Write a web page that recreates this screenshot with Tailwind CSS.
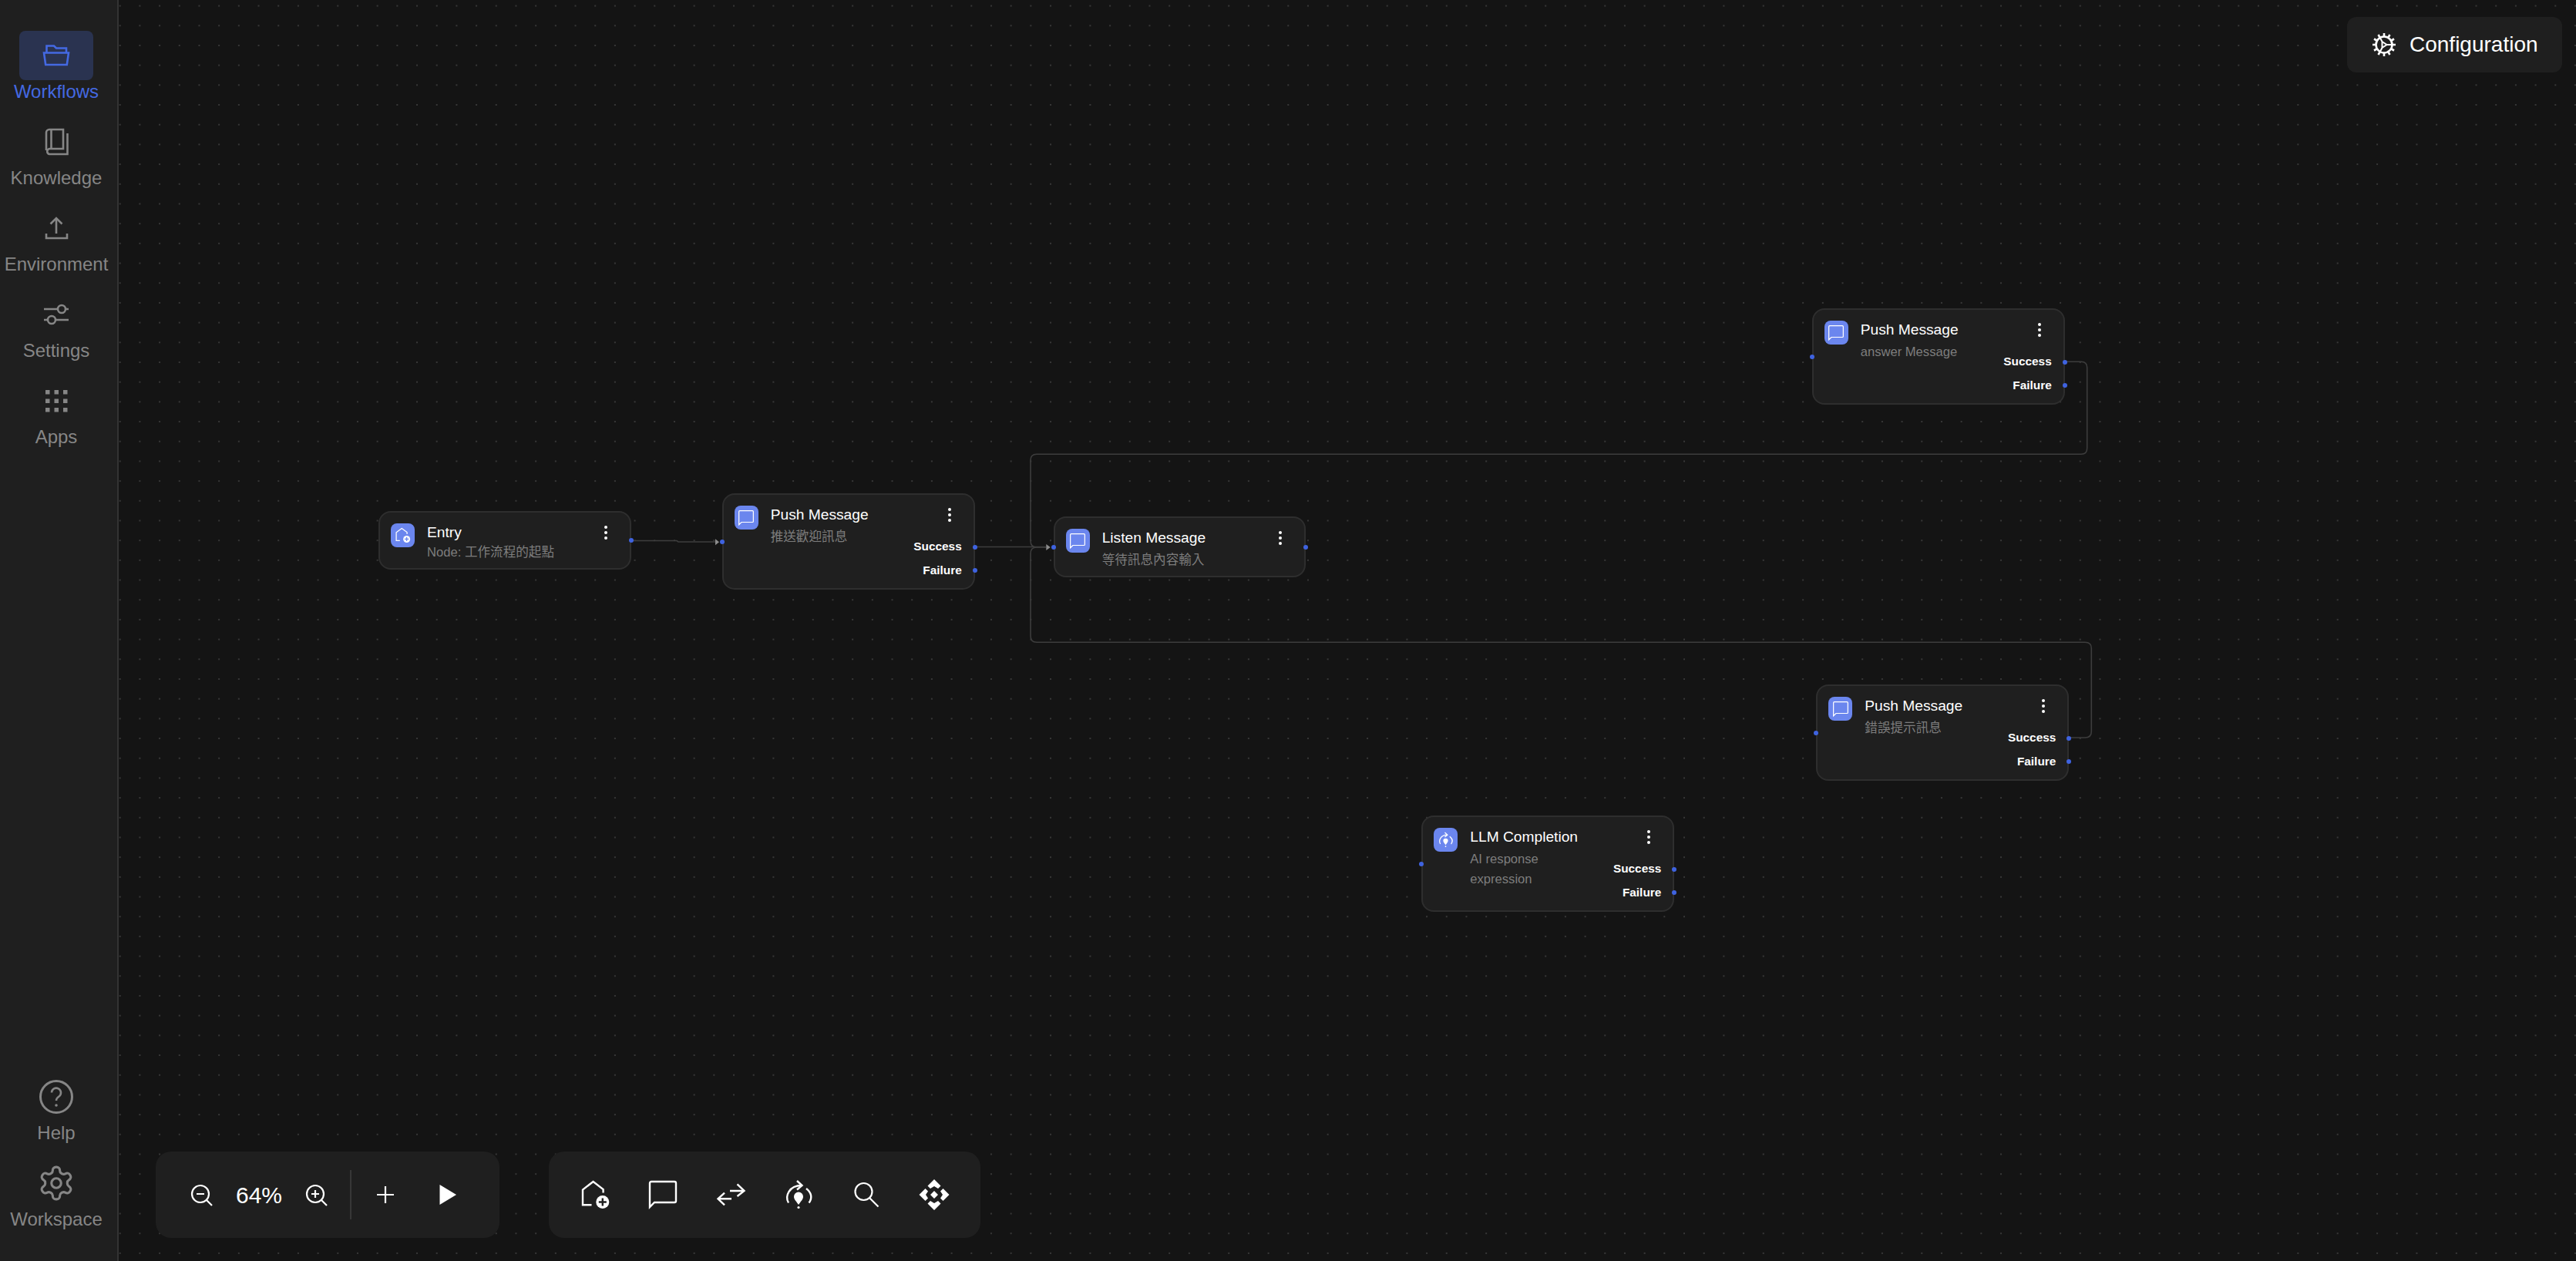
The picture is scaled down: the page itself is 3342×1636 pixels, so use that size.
<!DOCTYPE html>
<html lang="en">
<head>
<meta charset="utf-8">
<title>Workflows</title>
<script src="https://cdn.jsdelivr.net/npm/@tailwindcss/browser@4"></script>
</head>
<body class="bg-[#141414]">
<div class="flex h-[1636px] w-[3342px] overflow-hidden font-['Liberation_Sans','Noto_Sans_CJK_TC',sans-serif]">

  <!-- Sidebar -->
  <aside class="box-border flex h-full w-[154px] shrink-0 flex-col justify-between border-r-2 border-[#333333] bg-[#1f1f1f] pb-[21px] pr-[6px] pt-[40px]">
    <nav class="flex flex-col">
      <a class="flex h-[112px] flex-col items-center">
        <span class="flex h-[64px] w-[96px] items-center justify-center rounded-[8px] bg-[#2a3350]">
          <svg class="size-[40px] text-[#4469e2]" viewBox="0 0 40 40" fill="none" stroke="currentColor" stroke-width="2.6"><path d="M4 16.500h32l-2.200 15.500H6.200z"/><path d="M7.500 16V7.500h9.500l3 3h13V16"/></svg>
        </span>
        <span class="text-[24px] leading-[30px] text-[#4469e2]">Workflows</span>
      </a>
      <a class="flex h-[112px] flex-col items-center">
        <span class="flex h-[64px] w-[96px] items-center justify-center">
          <svg class="size-[40px] text-[#868686]" viewBox="0 0 40 40" fill="none" stroke="currentColor" stroke-width="2.6"><path d="M7 31V8a4 4 0 0 1 4-4h18v25H11a3.600 3.600 0 0 0 0 7h23.500V9"/><path d="M13.500 4v25"/></svg>
        </span>
        <span class="text-[24px] leading-[30px] text-[#868686]">Knowledge</span>
      </a>
      <a class="flex h-[112px] flex-col items-center">
        <span class="flex h-[64px] w-[96px] items-center justify-center">
          <svg class="size-[40px] text-[#868686]" viewBox="0 0 40 40" fill="none" stroke="currentColor" stroke-width="2.6"><path d="M20 27V8"/><path d="M12.500 14.500 20 7l7.500 7.500"/><path d="M7 27v6h27v-6"/></svg>
        </span>
        <span class="text-[24px] leading-[30px] text-[#868686]">Environment</span>
      </a>
      <a class="flex h-[112px] flex-col items-center">
        <span class="flex h-[64px] w-[96px] items-center justify-center">
          <svg class="size-[40px] text-[#868686]" viewBox="0 0 40 40" fill="none" stroke="currentColor" stroke-width="2.6"><path d="M4 13h18M32 13h4M4 27h5M19 27h17"/><circle cx="27" cy="13" r="5"/><circle cx="14" cy="27" r="5"/></svg>
        </span>
        <span class="text-[24px] leading-[30px] text-[#868686]">Settings</span>
      </a>
      <a class="flex h-[112px] flex-col items-center">
        <span class="flex h-[64px] w-[96px] items-center justify-center">
          <svg class="size-[40px] text-[#868686]" viewBox="0 0 40 40" fill="currentColor"><rect x="6" y="6" width="5.500" height="5.500"/><rect x="17.500" y="6" width="5.500" height="5.500"/><rect x="29" y="6" width="5.500" height="5.500"/><rect x="6" y="17.500" width="5.500" height="5.500"/><rect x="17.500" y="17.500" width="5.500" height="5.500"/><rect x="29" y="17.500" width="5.500" height="5.500"/><rect x="6" y="29" width="5.500" height="5.500"/><rect x="17.500" y="29" width="5.500" height="5.500"/><rect x="29" y="29" width="5.500" height="5.500"/></svg>
        </span>
        <span class="text-[24px] leading-[30px] text-[#868686]">Apps</span>
      </a>
    </nav>
    <nav class="flex flex-col">
      <a class="flex h-[112px] flex-col items-center">
        <span class="flex h-[64px] w-[96px] items-center justify-center">
          <svg class="size-[48px] text-[#868686]" viewBox="0 0 48 48" fill="none" stroke="currentColor" stroke-width="3"><circle cx="24" cy="24" r="20.500"/><path d="M18 18.500a6 6 0 1 1 9.500 5c-2.200 1.500-3.500 2.600-3.500 5.500" stroke-width="2.6"/><circle cx="24" cy="35" r="1.800" fill="currentColor" stroke="none"/></svg>
        </span>
        <span class="text-[24px] leading-[30px] text-[#868686]">Help</span>
      </a>
      <a class="flex h-[112px] flex-col items-center">
        <span class="flex h-[64px] w-[96px] items-center justify-center">
          <svg class="size-[50px] text-[#868686]" viewBox="0 0 24 24" fill="none" stroke="currentColor" stroke-width="1.5"><path d="M12.220 2h-.44a2 2 0 0 0-2 2v.18a2 2 0 0 1-1 1.730l-.43.25a2 2 0 0 1-2 0l-.15-.08a2 2 0 0 0-2.730.73l-.22.38a2 2 0 0 0 .73 2.730l.15.1a2 2 0 0 1 1 1.720v.51a2 2 0 0 1-1 1.740l-.15.09a2 2 0 0 0-.73 2.730l.22.38a2 2 0 0 0 2.730.73l.15-.08a2 2 0 0 1 2 0l.43.25a2 2 0 0 1 1 1.730V20a2 2 0 0 0 2 2h.44a2 2 0 0 0 2-2v-.18a2 2 0 0 1 1-1.730l.43-.25a2 2 0 0 1 2 0l.15.08a2 2 0 0 0 2.730-.73l.22-.39a2 2 0 0 0-.73-2.730l-.15-.08a2 2 0 0 1-1-1.740v-.5a2 2 0 0 1 1-1.740l.15-.09a2 2 0 0 0 .73-2.730l-.22-.38a2 2 0 0 0-2.730-.73l-.15.08a2 2 0 0 1-2 0l-.43-.25a2 2 0 0 1-1-1.730V4a2 2 0 0 0-2-2z"/><circle cx="12" cy="12" r="3"/></svg>
        </span>
        <span class="text-[24px] leading-[30px] text-[#868686]">Workspace</span>
      </a>
    </nav>
  </aside>

  <!-- Canvas -->
  <main class="relative h-full flex-1 bg-[#141414] bg-[radial-gradient(circle,#4e4e4e_0.5px,transparent_1px)] bg-[size:25.7px_25.7px] bg-[position:-11.15px_-5.25px]">

    <!-- Edges (canvas coordinates are offset by the 154px sidebar) -->
    <svg class="absolute -left-[154px] top-0 h-[1636px] w-[3342px]" viewBox="0 0 3342 1636" fill="none" stroke="#3d3d3d" stroke-width="1.6">
      <path d="M820 701.500H878l2 1.500H928"/>
      <path d="M1265 709.500H1357"/>
      <path d="M2678 469.300H2700Q2707.700 469.300 2707.700 477V581.500Q2707.700 589.300 2700 589.300H1345Q1337 589.300 1337 597V702Q1337 710 1345 710H1357"/>
      <path d="M2684 957H2705Q2713.300 957 2713.300 949V841Q2713.300 833.300 2705 833.300H1345Q1337 833.300 1337 825V718Q1337 710 1345 710H1357"/>
      <path d="M928 699.300 933 703.300 928 707.300z" fill="#8c8c8c" stroke="none"/>
      <path d="M1357.300 706 1362.700 710 1357.300 714z" fill="#8c8c8c" stroke="none"/>
    </svg>

    <!-- Entry -->
    <div class="absolute left-[337px] top-[663px] box-border flex h-[76px] w-[328px] rounded-[16px] border-2 border-[#2e2e2e] bg-[#1f1f1f] pl-[14px] pr-[15px] pt-[14px]">
      <span class="flex size-[31px] shrink-0 items-center justify-center rounded-[8px] bg-[#6b86ee] text-white">
        <svg class="size-[21px]" viewBox="0 0 40 40" fill="none" stroke="currentColor" stroke-width="2.4"><path d="M13 33.300H4V13L17.600 3l13 9.500V17"/><circle cx="29.800" cy="29.500" r="8.500" fill="currentColor" stroke="none"/><path d="M29.800 24.500v10M24.800 29.500h10" stroke="#6b86ee"/></svg>
      </span>
      <div class="ml-[16px] mt-[1px] min-w-0 flex-1">
        <div class="text-[19.2px] leading-[22px] text-white">Entry</div>
        <div class="mt-[2px] text-[16.6px] leading-[25px] text-[#7d7d7d]">Node: 工作流程的起點</div>
      </div>
      <svg class="mr-[14px] mt-[3px] h-[18px] w-[4px] shrink-0" viewBox="0 0 4 18" fill="#ffffff"><circle cx="2" cy="2" r="2"/><circle cx="2" cy="9" r="2"/><circle cx="2" cy="16" r="2"/></svg>
      <span class="absolute -right-[5px] top-[33px] size-[6px] rounded-full bg-[#3f63e0]"></span>
    </div>

    <!-- Push Message: welcome -->
    <div class="absolute left-[782.7px] top-[640px] box-border flex h-[125px] w-[328px] rounded-[16px] border-2 border-[#2e2e2e] bg-[#1f1f1f] pl-[14px] pr-[15px] pt-[14px]">
      <span class="flex size-[31px] shrink-0 items-center justify-center rounded-[8px] bg-[#6b86ee] text-white">
        <svg class="size-[22px]" viewBox="0 0 40 40" fill="none" stroke="currentColor" stroke-width="2.2"><path d="M3 36V5a2 2 0 0 1 2-2H35a2 2 0 0 1 2 2V28a2 2 0 0 1-2 2H9z"/></svg>
      </span>
      <div class="ml-[16px] mt-[1px] min-w-0 flex-1">
        <div class="text-[19.2px] leading-[22px] text-white">Push Message</div>
        <div class="mt-[5px] text-[16.6px] leading-[26px] text-[#7d7d7d]">推送歡迎訊息</div>
      </div>
      <div class="flex shrink-0 flex-col items-end">
        <svg class="mr-[14px] mt-[3px] h-[18px] w-[4px]" viewBox="0 0 4 18" fill="#ffffff"><circle cx="2" cy="2" r="2"/><circle cx="2" cy="9" r="2"/><circle cx="2" cy="16" r="2"/></svg>
        <div class="mt-[15.5px] text-[15.36px] font-bold leading-[31px] text-white">Success</div>
        <div class="text-[15.36px] font-bold leading-[31px] text-white">Failure</div>
      </div>
      <span class="absolute -left-[5px] top-[58px] size-[6px] rounded-full bg-[#3f63e0]"></span>
      <span class="absolute -right-[5px] top-[64.5px] size-[6px] rounded-full bg-[#3f63e0]"></span>
      <span class="absolute -right-[5px] top-[95px] size-[6px] rounded-full bg-[#3f63e0]"></span>
    </div>

    <!-- Listen Message -->
    <div class="absolute left-[1212.7px] top-[670px] box-border flex h-[79px] w-[327px] rounded-[16px] border-2 border-[#2e2e2e] bg-[#1f1f1f] pl-[14px] pr-[15px] pt-[14px]">
      <span class="flex size-[31px] shrink-0 items-center justify-center rounded-[8px] bg-[#6b86ee] text-white">
        <svg class="size-[22px]" viewBox="0 0 40 40" fill="none" stroke="currentColor" stroke-width="2.2"><path d="M3 36V5a2 2 0 0 1 2-2H35a2 2 0 0 1 2 2V28a2 2 0 0 1-2 2H9z"/></svg>
      </span>
      <div class="ml-[16px] mt-[1px] min-w-0 flex-1">
        <div class="text-[19.2px] leading-[22px] text-white">Listen Message</div>
        <div class="mt-[5px] text-[16.6px] leading-[25px] text-[#7d7d7d]">等待訊息內容輸入</div>
      </div>
      <svg class="mr-[14px] mt-[3px] h-[18px] w-[4px] shrink-0" viewBox="0 0 4 18" fill="#ffffff"><circle cx="2" cy="2" r="2"/><circle cx="2" cy="9" r="2"/><circle cx="2" cy="16" r="2"/></svg>
      <span class="absolute -left-[5px] top-[35px] size-[6px] rounded-full bg-[#3f63e0]"></span>
      <span class="absolute -right-[5px] top-[35px] size-[6px] rounded-full bg-[#3f63e0]"></span>
    </div>

    <!-- Push Message: answer -->
    <div class="absolute left-[2196.7px] top-[400px] box-border flex h-[125px] w-[328px] rounded-[16px] border-2 border-[#2e2e2e] bg-[#1f1f1f] pl-[14px] pr-[15px] pt-[14px]">
      <span class="flex size-[31px] shrink-0 items-center justify-center rounded-[8px] bg-[#6b86ee] text-white">
        <svg class="size-[22px]" viewBox="0 0 40 40" fill="none" stroke="currentColor" stroke-width="2.2"><path d="M3 36V5a2 2 0 0 1 2-2H35a2 2 0 0 1 2 2V28a2 2 0 0 1-2 2H9z"/></svg>
      </span>
      <div class="ml-[16px] mt-[1px] min-w-0 flex-1">
        <div class="text-[19.2px] leading-[22px] text-white">Push Message</div>
        <div class="mt-[5px] text-[16.6px] leading-[26px] text-[#7d7d7d]">answer Message</div>
      </div>
      <div class="flex shrink-0 flex-col items-end">
        <svg class="mr-[14px] mt-[3px] h-[18px] w-[4px]" viewBox="0 0 4 18" fill="#ffffff"><circle cx="2" cy="2" r="2"/><circle cx="2" cy="9" r="2"/><circle cx="2" cy="16" r="2"/></svg>
        <div class="mt-[15.5px] text-[15.36px] font-bold leading-[31px] text-white">Success</div>
        <div class="text-[15.36px] font-bold leading-[31px] text-white">Failure</div>
      </div>
      <span class="absolute -left-[5px] top-[58px] size-[6px] rounded-full bg-[#3f63e0]"></span>
      <span class="absolute -right-[5px] top-[64.5px] size-[6px] rounded-full bg-[#3f63e0]"></span>
      <span class="absolute -right-[5px] top-[95px] size-[6px] rounded-full bg-[#3f63e0]"></span>
    </div>

    <!-- Push Message: error -->
    <div class="absolute left-[2202.3px] top-[888.3px] box-border flex h-[125px] w-[328px] rounded-[16px] border-2 border-[#2e2e2e] bg-[#1f1f1f] pl-[14px] pr-[15px] pt-[14px]">
      <span class="flex size-[31px] shrink-0 items-center justify-center rounded-[8px] bg-[#6b86ee] text-white">
        <svg class="size-[22px]" viewBox="0 0 40 40" fill="none" stroke="currentColor" stroke-width="2.2"><path d="M3 36V5a2 2 0 0 1 2-2H35a2 2 0 0 1 2 2V28a2 2 0 0 1-2 2H9z"/></svg>
      </span>
      <div class="ml-[16px] mt-[1px] min-w-0 flex-1">
        <div class="text-[19.2px] leading-[22px] text-white">Push Message</div>
        <div class="mt-[5px] text-[16.6px] leading-[26px] text-[#7d7d7d]">錯誤提示訊息</div>
      </div>
      <div class="flex shrink-0 flex-col items-end">
        <svg class="mr-[14px] mt-[3px] h-[18px] w-[4px]" viewBox="0 0 4 18" fill="#ffffff"><circle cx="2" cy="2" r="2"/><circle cx="2" cy="9" r="2"/><circle cx="2" cy="16" r="2"/></svg>
        <div class="mt-[15.5px] text-[15.36px] font-bold leading-[31px] text-white">Success</div>
        <div class="text-[15.36px] font-bold leading-[31px] text-white">Failure</div>
      </div>
      <span class="absolute -left-[5px] top-[58px] size-[6px] rounded-full bg-[#3f63e0]"></span>
      <span class="absolute -right-[5px] top-[64.5px] size-[6px] rounded-full bg-[#3f63e0]"></span>
      <span class="absolute -right-[5px] top-[95px] size-[6px] rounded-full bg-[#3f63e0]"></span>
    </div>

    <!-- LLM Completion -->
    <div class="absolute left-[1690.3px] top-[1058.3px] box-border flex h-[125px] w-[328px] rounded-[16px] border-2 border-[#2e2e2e] bg-[#1f1f1f] pl-[14px] pr-[15px] pt-[14px]">
      <span class="flex size-[31px] shrink-0 items-center justify-center rounded-[8px] bg-[#6b86ee] text-white">
        <svg class="size-[21px]" viewBox="0 0 40 40" fill="none" stroke="currentColor" stroke-width="2.4"><path d="M7 30.500C2 22 7.500 8 24 8"/><path d="M18 2l6.500 6L18 13.500"/><path d="M30 12c6.500 5 8.500 12 3.500 18.500"/><path d="M20 33c-3-4.500-6-7-6-10.500a6 6 0 0 1 12 0c0 3.500-3 6-6 10.500z" fill="currentColor" stroke="none"/><circle cx="20" cy="36.500" r="1.600" fill="currentColor" stroke="none"/></svg>
      </span>
      <div class="ml-[16px] mt-[1px] min-w-0 flex-1">
        <div class="text-[19.2px] leading-[22px] text-white">LLM Completion</div>
        <div class="mt-[5px] text-[16.6px] leading-[26px] text-[#7d7d7d]">AI response<br>expression</div>
      </div>
      <div class="flex shrink-0 flex-col items-end">
        <svg class="mr-[14px] mt-[3px] h-[18px] w-[4px]" viewBox="0 0 4 18" fill="#ffffff"><circle cx="2" cy="2" r="2"/><circle cx="2" cy="9" r="2"/><circle cx="2" cy="16" r="2"/></svg>
        <div class="mt-[15.5px] text-[15.36px] font-bold leading-[31px] text-white">Success</div>
        <div class="text-[15.36px] font-bold leading-[31px] text-white">Failure</div>
      </div>
      <span class="absolute -left-[5px] top-[58px] size-[6px] rounded-full bg-[#3f63e0]"></span>
      <span class="absolute -right-[5px] top-[64.5px] size-[6px] rounded-full bg-[#3f63e0]"></span>
      <span class="absolute -right-[5px] top-[95px] size-[6px] rounded-full bg-[#3f63e0]"></span>
    </div>

    <!-- Configuration -->
    <button class="absolute right-[18px] top-[22px] flex h-[72px] w-[279px] items-center gap-[17px] rounded-[12px] bg-[#1f1f1f] pl-[32px] text-[28px] text-white">
      <svg class="size-[32px]" viewBox="0 0 32 32" fill="none" stroke="currentColor" stroke-width="2.6"><circle cx="16" cy="16" r="10.500"/><path d="M16 1v4M16 27v4M1 16h4M27 16h4M8.500 3l2 3.500M21.500 25.500l2 3.500M3 8.500l3.500 2M25.500 21.500l3.500 2M3 23.500l3.500-2M25.500 10.500l3.500-2M8.500 29l2-3.500M21.500 6.500l2-3.500"/><path d="M13.500 12v8l6-4zM19.500 16H27M13.500 12l-3-5.500M13.500 20l-3 5.500" stroke-width="2"/></svg>
      <span>Configuration</span>
    </button>

    <!-- Bottom-left toolbar -->
    <div class="absolute bottom-[30px] left-[48px] flex h-[112px] w-[446px] items-center rounded-[20px] bg-[#1f1f1f] pl-[39px] text-white">
      <svg class="size-[40px] shrink-0" viewBox="0 0 40 40" fill="none" stroke="currentColor" stroke-width="2.2"><circle cx="19" cy="19" r="11"/><path d="M27 27l7 7M14 19h10"/></svg>
      <span class="ml-[25px] w-[60px] text-center text-[30px]">64%</span>
      <svg class="ml-[24px] size-[40px] shrink-0" viewBox="0 0 40 40" fill="none" stroke="currentColor" stroke-width="2.2"><circle cx="19" cy="19" r="11"/><path d="M27 27l7 7M14 19h10M19 14v10"/></svg>
      <span class="ml-[24px] h-[64px] w-[2px] shrink-0 bg-[#373737]"></span>
      <svg class="ml-[24px] size-[40px] shrink-0" viewBox="0 0 40 40" fill="none" stroke="currentColor" stroke-width="2.2"><path d="M9 20h22M20 9v22"/></svg>
      <svg class="ml-[48px] size-[40px] shrink-0" viewBox="0 0 40 40" fill="currentColor"><path d="M2.500 7 24 20 2.500 33z"/></svg>
    </div>

    <!-- Bottom toolbar -->
    <div class="absolute bottom-[30px] left-[558px] flex h-[112px] w-[560px] items-center gap-[48px] rounded-[20px] bg-[#1f1f1f] pl-[40px] text-white">
      <svg class="size-[40px] shrink-0" viewBox="0 0 40 40" fill="none" stroke="currentColor" stroke-width="2.4"><path d="M15.500 33.300H4V13.500L17.600 3l13 10v4.500"/><circle cx="29.800" cy="29.500" r="8.500" fill="currentColor" stroke="none"/><path d="M29.800 24.500v10M24.800 29.500h10" stroke="#1f1f1f"/></svg>
      <svg class="size-[40px] shrink-0" viewBox="0 0 40 40" fill="none" stroke="currentColor" stroke-width="2.4"><path d="M3 36V5a2 2 0 0 1 2-2H35a2 2 0 0 1 2 2V28a2 2 0 0 1-2 2H9z"/></svg>
      <svg class="size-[40px] shrink-0" viewBox="0 0 40 40" fill="none" stroke="currentColor" stroke-width="2.4"><path d="M19 15h18M28.500 6.300 37.500 15l-9 7M21 25.300H3.500M12 17.700 3.500 25.300 12 33.300"/></svg>
      <svg class="size-[40px] shrink-0" viewBox="0 0 40 40" fill="none" stroke="currentColor" stroke-width="2.4"><path d="M7 30.500C2 22 7.500 8 24 8"/><path d="M18 2l6.500 6L18 13.500"/><path d="M30 12c6.500 5 8.500 12 3.500 18.500"/><path d="M20 33c-3-4.500-6-7-6-10.500a6 6 0 0 1 12 0c0 3.500-3 6-6 10.500z" fill="currentColor" stroke="none"/><circle cx="20" cy="36.500" r="1.600" fill="currentColor" stroke="none"/></svg>
      <svg class="size-[40px] shrink-0" viewBox="0 0 40 40" fill="none" stroke="currentColor" stroke-width="2.2"><circle cx="16.500" cy="16" r="11"/><path d="M24.500 24.500 35.500 35.500"/></svg>
      <svg class="size-[40px] shrink-0" viewBox="0 0 40 40" fill="currentColor"><path d="M20 0l8.500 8.500-3.500 3.500-5-3-5 3-3.500-3.500zM20 40l8.500-8.500-3.500-3.500-5 3-5-3-3.500 3.500zM0.500 20l8-8 3.500 3.500-3 4.500 3 4.500-3.500 3.500zM39.500 20l-8-8-3.500 3.500 3 4.500-3 4.500 3.500 3.500zM20 15l5 5-5 5-5-5z"/></svg>
    </div>
  </main>
</div>
</body>
</html>
